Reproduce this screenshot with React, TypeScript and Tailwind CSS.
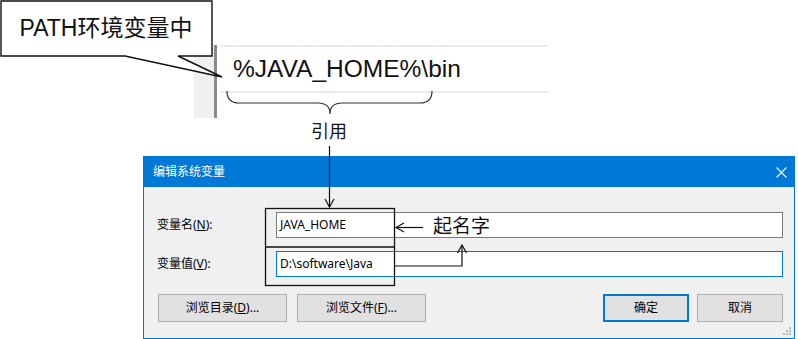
const ui = "font-['Noto_Sans','Noto_Sans_CJK_SC',sans-serif]";

const Button = ({ label, primary }: { label: React.ReactNode; primary?: boolean }) => (
  <div
    className={
      primary
        ? 'flex h-[28px] w-[86px] items-center justify-center border-2 border-[#0078d7] bg-[#e1e1e1] text-[12px] text-black'
        : 'flex h-[28px] items-center justify-center border border-[#adadad] bg-[#e1e1e1] text-[12px] text-black'
    }
  >
    {label}
  </div>
);

const Annotations = () => (
  <svg
    className="pointer-events-none absolute inset-0"
    width="798"
    height="339"
    viewBox="0 0 798 339"
    fill="none"
  >
    {/* callout bubble */}
    <path
      d="M1 1 H212 V56 H178 L222 77 L125 56 H1 Z"
      fill="white"
      stroke="#111"
      strokeWidth="1.4"
    />
    {/* brace under the value */}
    <path
      d="M227 91 Q227 103 239 103 H318 Q330 103 330 114 Q330 103 342 103 H420 Q432 103 432 91"
      stroke="#333"
      strokeWidth="1.2"
    />
    {/* arrow down into the dialog */}
    <path d="M329.5 146 V207" stroke="#111" strokeWidth="1.2" />
    <path d="M325 199 L329.5 207 L334 199" stroke="#111" strokeWidth="1.2" />
    {/* box round name and value */}
    <rect x="265.5" y="208.5" width="129" height="77" stroke="#111" strokeWidth="1.3" />
    <path d="M265.5 247 H394.5" stroke="#111" strokeWidth="1.3" />
    {/* arrow from label to name */}
    <path d="M423 227.5 H396" stroke="#111" strokeWidth="1.2" />
    <path d="M404 223 L396 227.5 L404 232" stroke="#111" strokeWidth="1.2" />
    {/* arrow from value up to label */}
    <path d="M394.5 266 H462 V246" stroke="#111" strokeWidth="1.2" />
    <path d="M457.5 253 L462 245 L466.5 253" stroke="#111" strokeWidth="1.2" />
  </svg>
);

export default function App() {
  return (
    <div className={`relative h-[339px] w-[798px] overflow-hidden bg-white ${ui}`}>
      {/* snippet of the Path entry */}
      <div className="flex h-[156px] pl-[194px] pt-[45px]">
        <div className="h-[73px] w-[20px] bg-[#f0f0f0]" />
        <div className="h-[73px] w-[3px] bg-[#8a8a8a]" />
        <div className="ml-[3px] w-[328px]">
          <div className="flex h-[48px] items-center border-y-2 border-[#ececec] pl-[13px] font-['Liberation_Sans',sans-serif] text-[24.5px] leading-none text-[#111]">
            %JAVA_HOME%\bin
          </div>
        </div>
      </div>

      {/* edit system variable dialog */}
      <div className="relative ml-[143px] flex h-[183px] w-[652px] flex-col border border-[#0078d7] bg-[#f0f0f0]">
        <div className="flex h-[30px] items-center justify-between bg-[#0078d7] pl-[9px] pr-[7px] text-[12px] text-white">
          <span>编辑系统变量</span>
          <svg width="11" height="11" viewBox="0 0 11 11" stroke="white" strokeWidth="1.1">
            <path d="M0.5 0.5 L10.5 10.5 M10.5 0.5 L0.5 10.5" />
          </svg>
        </div>
        <div className="flex flex-col gap-[13px] pl-[13px] pr-[11px] pt-[25px] text-[12px] text-black">
          <div className="flex h-[26px] items-center">
            <div className="w-[119px]">
              变量名(<span className="underline">N</span>):
            </div>
            <div className="flex h-full flex-1 items-center border border-[#7a7a7a] bg-white pl-[3px]">
              JAVA_HOME
            </div>
          </div>
          <div className="flex h-[26px] items-center">
            <div className="w-[119px]">
              变量值(<span className="underline">V</span>):
            </div>
            <div className="flex h-full flex-1 items-center border border-[#0078d7] bg-white pl-[3px]">
              D:\software\Java
            </div>
          </div>
        </div>
        <div className="mt-[17px] flex justify-between pl-[14px] pr-[11px]">
          <div className="flex gap-[10px]">
            <div className="w-[129px]">
              <Button label={<span>浏览目录(<span className="underline">D</span>)...</span>} />
            </div>
            <div className="w-[129px]">
              <Button label={<span>浏览文件(<span className="underline">F</span>)...</span>} />
            </div>
          </div>
          <div className="flex gap-[8px]">
            <Button label="确定" primary />
            <div className="w-[86px]">
              <Button label="取消" />
            </div>
          </div>
        </div>
        {/* resize grip */}
        <svg className="absolute bottom-[2px] right-[2px]" width="9" height="9" viewBox="0 0 9 9" fill="#b8b8b8">
          <rect x="6" y="0" width="2" height="2" />
          <rect x="3" y="3" width="2" height="2" />
          <rect x="6" y="3" width="2" height="2" />
          <rect x="0" y="6" width="2" height="2" />
          <rect x="3" y="6" width="2" height="2" />
          <rect x="6" y="6" width="2" height="2" />
        </svg>
      </div>

      <Annotations />

      {/* annotation labels */}
      <div className="absolute left-0 top-0 flex h-[56px] w-[212px] items-center justify-center font-['Liberation_Sans','Noto_Sans_CJK_SC',sans-serif] text-[23px] leading-none text-[#111]">
        PATH环境变量中
      </div>
      <div className="absolute left-[311px] top-[122px] bg-white text-[18px] leading-none text-[#111]">引用</div>
      <div className="absolute left-[433px] top-[217px] text-[19px] leading-none text-[#111]">起名字</div>
    </div>
  );
}
